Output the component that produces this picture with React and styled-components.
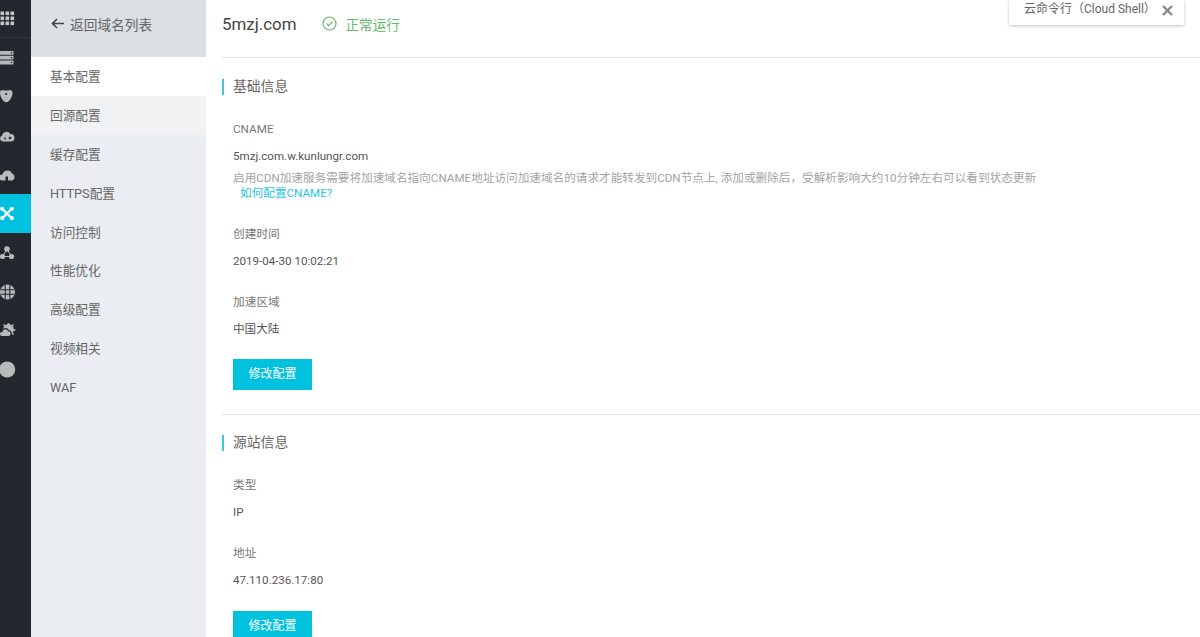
import React from 'react'
import styled, { createGlobalStyle } from 'styled-components'

const CJK = '"Roboto", "Noto Sans CJK SC", sans-serif'
const RAIL_BG = '#22282e'

const Global = createGlobalStyle`
  html, body { margin: 0; padding: 0; height: 100%; overflow: hidden; background: #fff; }
  body { font-family: ${CJK}; font-size: 12px; color: #333; }
  #root { height: 100%; }
`

const Page = styled.div`
  display: flex;
  width: 1200px;
  height: 637px;
  overflow: hidden;
  position: relative;
`

const Rail = styled.nav`
  width: 31px;
  flex: none;
  background: ${RAIL_BG};
  display: flex;
  flex-direction: column;
`

const RailTop = styled.div`
  height: 38px;
  box-sizing: border-box;
  display: flex;
  align-items: center;
  border-bottom: 1px solid #2f363c;
  color: #c4c6c8;
  svg { display: block; }
`

const RailItem = styled.div`
  height: 39px;
  flex: none;
  display: flex;
  align-items: center;
  background: ${props => (props.active ? '#00c1de' : 'transparent')};
  color: ${props => (props.active ? '#fff' : '#b8babc')};
  svg { display: block; }
`

const Side = styled.aside`
  width: 175px;
  flex: none;
  background: #eaedf1;
  display: flex;
  flex-direction: column;
`

const BackLink = styled.div`
  height: 57px;
  box-sizing: border-box;
  background: #dbe0e4;
  display: flex;
  align-items: center;
  gap: 6px;
  padding: 0 0 10px 20px;
  font-size: 13.7px;
  color: #666;
`

const SideItem = styled.div`
  height: 38.9px;
  line-height: 40px;
  padding-left: 19px;
  font-size: 12.7px;
  color: #666;
  background: ${props => props.bg || 'transparent'};
`

const Main = styled.main`
  flex: 1;
  min-width: 0;
  padding-left: 16px;
`

const Header = styled.header`
  height: 58px;
  box-sizing: border-box;
  display: flex;
  align-items: center;
  gap: 26px;
  border-bottom: 1px solid #e8e8e8;
  padding-bottom: 10px;
`

const Domain = styled.h1`
  margin: 0;
  font-size: 16.9px;
  font-weight: 400;
  color: #444;
`

const Status = styled.div`
  display: flex;
  align-items: center;
  gap: 8px;
  font-size: 13.6px;
  color: #66bb6a;
`

const Section = styled.section`
  padding-top: ${props => props.top || '20px'};
  padding-bottom: 24px;
  border-bottom: ${props => (props.divider ? '1px solid #e8e8e8' : 'none')};
`

const SectionTitle = styled.h2`
  margin: 0 0 26px;
  height: 16px;
  line-height: 15px;
  border-left: 2px solid #3cc8dc;
  padding-left: 9px;
  font-size: 13.8px;
  font-weight: 400;
  color: #666;
`

const Body = styled.div`
  padding-left: 11px;
`

const Label = styled.div`
  font-size: 11.7px;
  line-height: 16px;
  color: #777;
  margin-bottom: 11px;
`

const Value = styled.div`
  font-size: 11.6px;
  line-height: 16px;
  color: #555;
  margin-bottom: ${props => props.gap || '25px'};
`

const Hint = styled.p`
  margin: 6.5px 0 25.5px;
  font-size: 11.64px;
  line-height: 15px;
  color: #a3a3a3;
  white-space: nowrap;
`

const HelpLink = styled.a`
  display: block;
  padding-left: 7px;
  color: #2cc4e0;
`

const PrimaryButton = styled.button`
  display: block;
  width: 79px;
  height: 31px;
  border: 0;
  padding: 0 0 5px;
  background: #00c1de;
  color: #fff;
  font-family: ${CJK};
  font-size: 12px;
`

const ShellTab = styled.div`
  position: absolute;
  top: 0;
  right: 16px;
  width: 175px;
  height: 25px;
  box-sizing: border-box;
  background: #fff;
  box-shadow: 0 1px 3px rgba(0, 0, 0, 0.25);
  display: flex;
  align-items: center;
  justify-content: space-between;
  padding: 0 11px 11px 15px;
  font-size: 12px;
  color: #666;
`

const Close = styled.span`
  display: flex;
  color: #888;
  margin-top: 7px;
`

const GridIcon = () => (
  <svg width="16" height="16" viewBox="0 0 16 16" fill="currentColor">
    {[0, 5, 10].flatMap(y => [0, 5, 10].map(x => <rect key={`${x}-${y}`} x={x + 0.5} y={y + 0.5} width="3.6" height="3.6" />))}
  </svg>
)

const ServerIcon = () => (
  <svg width="14" height="14" viewBox="0 0 14 14" fill="currentColor">
    {[0, 4.8, 9.6].map(y => (
      <g key={y}>
        <rect y={y} width="13.5" height="3.8" rx="0.6" />
        <circle cx="11.5" cy={y + 1.9} r="0.8" fill={RAIL_BG} />
      </g>
    ))}
  </svg>
)

const ShieldIcon = () => (
  <svg width="14" height="15" viewBox="0 0 14 15" fill="currentColor">
    <path d="M0 3.5Q0 1 2.5 1Q6 2.2 9.5 1Q12.5 1 12.5 3.5Q12.5 8 9 12Q6.5 14.5 3.5 12Q0 8 0 3.5Z" />
    <circle cx="6.2" cy="5" r="1.1" fill={RAIL_BG} />
  </svg>
)

const CloudIcon = () => (
  <svg width="15" height="12" viewBox="0 0 15 12" fill="currentColor">
    <path d="M3 11.5a3 3 0 0 1-1-5.8A4.6 4.6 0 0 1 10.4 4 3.8 3.8 0 0 1 11.5 11.5Z" />
    <circle cx="10" cy="8" r="1.3" fill={RAIL_BG} />
    <circle cx="5" cy="8.5" r="0.9" fill={RAIL_BG} />
  </svg>
)

const CloudUpIcon = () => (
  <svg width="15" height="14" viewBox="0 0 15 14" fill="currentColor">
    <path d="M2 12.5a3 3 0 0 1 .5-6A5 5 0 0 1 12 5.5 3.6 3.6 0 0 1 11.5 12.5H8V8.5H5.5V12.5Z" />
  </svg>
)

const LinkIcon = () => (
  <svg width="15" height="15" viewBox="0 0 15 15" stroke="currentColor" fill="currentColor" strokeWidth="2.2">
    <path d="M2.5 3l9 9M11.5 3l-9 9" />
    <circle cx="2.2" cy="2.8" r="1" /><circle cx="11.8" cy="2.8" r="1" />
    <circle cx="2.2" cy="12.2" r="1" /><circle cx="11.8" cy="12.2" r="1" />
  </svg>
)

const NodesIcon = () => (
  <svg width="15" height="14" viewBox="0 0 15 14" fill="currentColor">
    <path d="M7 3 2.5 10.5h9Z" fill="none" stroke="currentColor" strokeWidth="1" />
    <circle cx="7" cy="3" r="2.8" /><circle cx="2.5" cy="10.5" r="2.6" /><circle cx="11.5" cy="10.5" r="2.6" />
  </svg>
)

const GlobeIcon = () => (
  <svg width="16" height="16" viewBox="0 0 16 16" fill="currentColor">
    <circle cx="7.5" cy="8" r="7.5" />
    <path d="M1 5.8h13M1 10.2h13M5.2 1.2v13.6M9.8 1.2v13.6" stroke={RAIL_BG} strokeWidth="1.1" fill="none" />
  </svg>
)

const SunCloudIcon = () => (
  <svg width="16" height="15" viewBox="0 0 16 15" fill="currentColor">
    <circle cx="8.5" cy="6.5" r="5.4" />
    <path d="M8.5 0v2M3.5 1.5l1.5 1.5M13.5 1.5 12 3M15.5 7h-2M13.5 11.5 12 10" stroke="currentColor" strokeWidth="1.5" />
    <path d="M2 13.5a2.6 2.6 0 0 1 0-5.2A3.4 3.4 0 0 1 8.4 7.6 3 3 0 0 1 9 13.5Z" stroke={RAIL_BG} strokeWidth="1.2" />
  </svg>
)

const DotIcon = () => (
  <svg width="16" height="17" viewBox="0 0 16 17" fill="currentColor">
    <circle cx="7.2" cy="8.5" r="8" />
  </svg>
)

const railIcons = [
  <ServerIcon key="a" />, <ShieldIcon key="b" />, <CloudIcon key="c" />, <CloudUpIcon key="d" />,
  <LinkIcon key="e" />, <NodesIcon key="f" />, <GlobeIcon key="g" />, <SunCloudIcon key="h" />, <DotIcon key="i" />
]

const sideItems = ['基本配置', '回源配置', '缓存配置', 'HTTPS配置', '访问控制', '性能优化', '高级配置', '视频相关', 'WAF']

export default function App () {
  return (
    <Page>
      <Global />
      <Rail>
        <RailTop><GridIcon /></RailTop>
        {railIcons.map((icon, i) => <RailItem key={i} active={i === 4}>{icon}</RailItem>)}
      </Rail>
      <Side>
        <BackLink>
          <svg width="13" height="11" viewBox="0 0 13 11" fill="none" stroke="#444" strokeWidth="1.6">
            <path d="M13 5.5H1.5M6 1 1.5 5.5 6 10" />
          </svg>
          返回域名列表
        </BackLink>
        {sideItems.map((t, i) => (
          <SideItem key={t} bg={i === 0 ? '#fff' : i === 1 ? '#f0f2f4' : undefined}>{t}</SideItem>
        ))}
      </Side>
      <Main>
        <Header>
          <Domain>5mzj.com</Domain>
          <Status>
            <svg width="15" height="15" viewBox="0 0 15 15" fill="none" stroke="#66bb6a" strokeWidth="1.2">
              <circle cx="7.5" cy="7.5" r="6.5" /><path d="M4.5 7.5l2.2 2.2 3.8-4" />
            </svg>
            正常运行
          </Status>
        </Header>
        <Section top="21px" divider>
          <SectionTitle>基础信息</SectionTitle>
          <Body>
            <Label>CNAME</Label>
            <Value gap="0">5mzj.com.w.kunlungr.com</Value>
            <Hint>
              启用CDN加速服务需要将加速域名指向CNAME地址访问加速域名的请求才能转发到CDN节点上, 添加或删除后，受解析影响大约10分钟左右可以看到状态更新
              <HelpLink>如何配置CNAME?</HelpLink>
            </Hint>
            <Label>创建时间</Label>
            <Value>2019-04-30 10:02:21</Value>
            <Label>加速区域</Label>
            <Value gap="22px">中国大陆</Value>
            <PrimaryButton>修改配置</PrimaryButton>
          </Body>
        </Section>
        <Section>
          <SectionTitle>源站信息</SectionTitle>
          <Body>
            <Label>类型</Label>
            <Value>IP</Value>
            <Label>地址</Label>
            <Value gap="23px">47.110.236.17:80</Value>
            <PrimaryButton>修改配置</PrimaryButton>
          </Body>
        </Section>
      </Main>
      <ShellTab>
        <span>云命令行（Cloud Shell）</span>
        <Close>
          <svg width="11" height="11" viewBox="0 0 11 11" stroke="currentColor" strokeWidth="2.4"><path d="M1 1l9 9M10 1 1 10" /></svg>
        </Close>
      </ShellTab>
    </Page>
  )
}
